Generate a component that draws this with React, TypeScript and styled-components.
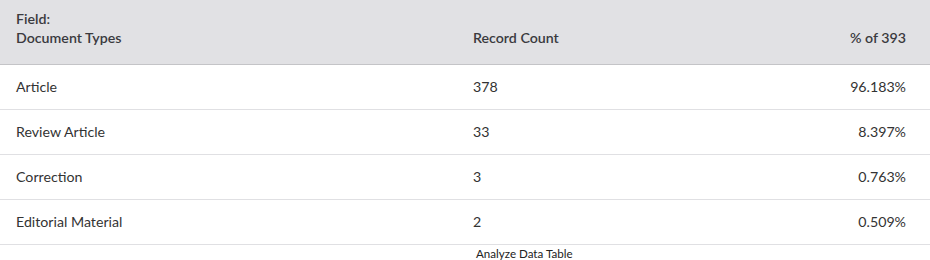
import React from "react";
import styled, { createGlobalStyle } from "styled-components";

const Global = createGlobalStyle`
  html, body { margin: 0; padding: 0; background: #ffffff; }
  body { font-family: "Lato", "Noto Sans", sans-serif; color: #333333; }
`;

const Wrap = styled.div`
  width: 930px;
`;

const Table = styled.div`
  display: flex;
  flex-direction: column;
`;

const Row = styled.div<{ $head?: boolean }>`
  display: grid;
  grid-template-columns: 457px 1fr 200px;
  align-items: ${(p) => (p.$head ? "end" : "center")};
  height: ${(p) => (p.$head ? "64px" : "43px")};
  padding-bottom: ${(p) => (p.$head ? "0" : "1px")};
  background: ${(p) => (p.$head ? "#e1e1e4" : "#ffffff")};
  border-bottom: 1px solid ${(p) => (p.$head ? "#c4c4c7" : "#e0e0e3")};
  box-sizing: content-box;
  font-size: 14.2px;
  font-weight: ${(p) => (p.$head ? 600 : 400)};
  line-height: 19px;
`;

const Cell = styled.div<{ $right?: boolean; $head?: boolean }>`
  padding: ${(p) => (p.$head ? "0 0 17px" : "0")};
  padding-left: ${(p) => (p.$right ? "0" : "16px")};
  padding-right: ${(p) => (p.$right ? "24px" : "0")};
  text-align: ${(p) => (p.$right ? "right" : "left")};
  color: ${(p) => (p.$head ? "#3a3a3e" : "#333333")};
`;

const Caption = styled.div`
  padding-left: 476px;
  font-size: 11.6px;
  line-height: 16px;
  padding-top: 1px;
  color: #222222;
`;

const data = [
  { name: "Article", count: "378", pct: "96.183%" },
  { name: "Review Article", count: "33", pct: "8.397%" },
  { name: "Correction", count: "3", pct: "0.763%" },
  { name: "Editorial Material", count: "2", pct: "0.509%" },
];

export default function App() {
  return (
    <Wrap>
      <Global />
      <Table>
        <Row $head>
          <Cell $head>
            Field:
            <br />
            Document Types
          </Cell>
          <Cell $head>Record Count</Cell>
          <Cell $head $right>
            % of 393
          </Cell>
        </Row>
        {data.map((d) => (
          <Row key={d.name}>
            <Cell>{d.name}</Cell>
            <Cell>{d.count}</Cell>
            <Cell $right>{d.pct}</Cell>
          </Row>
        ))}
      </Table>
      <Caption>Analyze Data Table</Caption>
    </Wrap>
  );
}
